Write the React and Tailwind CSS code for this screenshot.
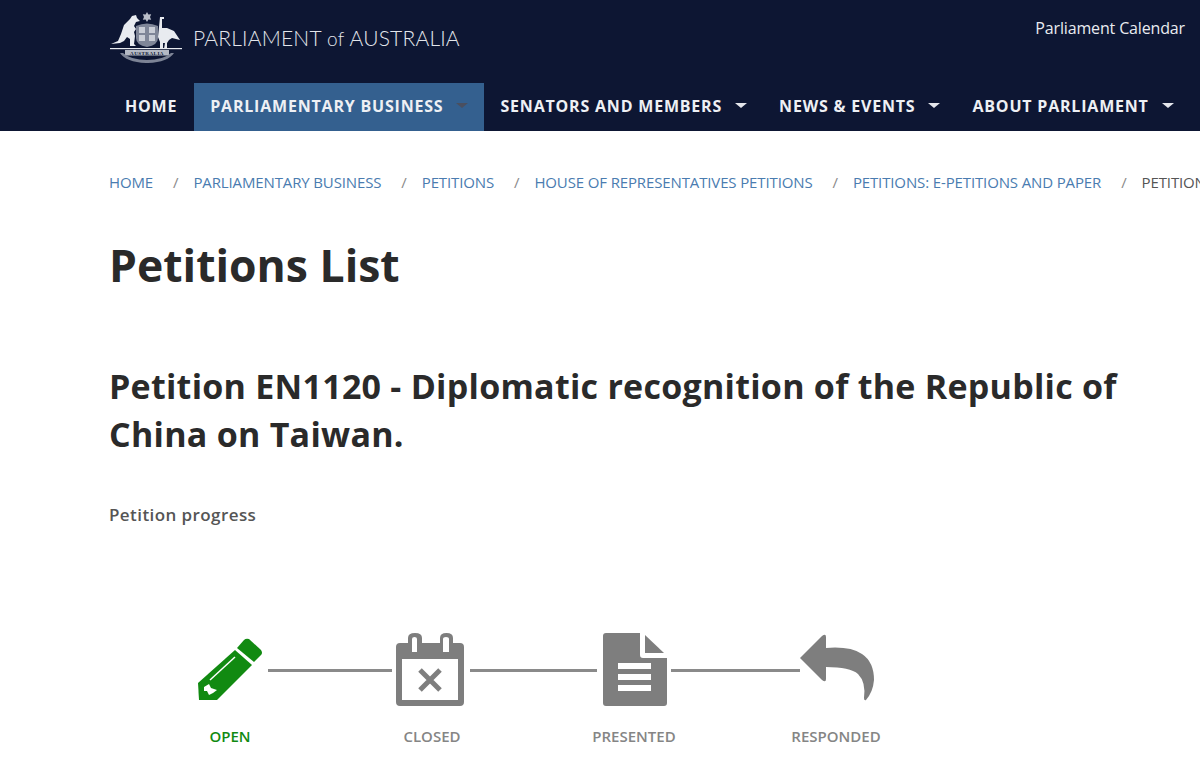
import React from 'react';

const navItems = [
  { label: 'HOME' },
  { label: 'PARLIAMENTARY BUSINESS', caret: true, active: true },
  { label: 'SENATORS AND MEMBERS', caret: true },
  { label: 'NEWS & EVENTS', caret: true },
  { label: 'ABOUT PARLIAMENT', caret: true },
];

const crumbs = [
  'HOME',
  'PARLIAMENTARY BUSINESS',
  'PETITIONS',
  'HOUSE OF REPRESENTATIVES PETITIONS',
  'PETITIONS: E-PETITIONS AND PAPER',
];

const steps = [
  { label: 'OPEN', active: true },
  { label: 'CLOSED' },
  { label: 'PRESENTED' },
  { label: 'RESPONDED' },
];

const Crest = () => (
  <svg width="74" height="54" viewBox="0 0 74 54" className="shrink-0" fill="#e8ebf0">
    {/* kangaroo */}
    <path d="M27 4 l1 3 l3 3 l-4 1 l-2 4 l2 3 l-2 3 l1 4 l-1 8 l2 2 l-6 0 l0 -7 l-3 -2 l-3 4 l-4 2 l-9 1 l7 -3 l3 -7 l3 -9 l6 -6 l2 -3 z" />
    {/* emu */}
    <path d="M51 6 l4 0 l0 2 l-2 0 l0 9 l5 0 l7 3 l6 9 l-8 -2 l-3 2 l-2 3 l0 5 l2 1 l-5 0 l1 -6 l-2 0 l0 6 l-3 0 l0 -7 l-2 -5 z" />
    {/* crest star */}
    <path d="M38 1 l1.400 2.600 l2.800 -.4 l-1.200 2.800 l1.200 2.800 l-2.800 -.4 l-1.400 2.600 l-1.400 -2.600 l-2.800 .4 l1.200 -2.800 l-1.200 -2.800 l2.800 .4 z" fill="#b9bdc8" />
    {/* shield */}
    <path d="M27 15 q11 -5 22 0 v12 q0 7 -11 9 q-11 -2 -11 -9 z" fill="#7f8698" />
    <path d="M30 16 h6 v6 h-6 z M40 16 h6 v6 h-6 z M30 24 h6 v6 h-6 z M40 24 h6 v6 h-6 z" fill="#c9cdd6" />
    <rect x="1" y="37" width="72" height="1.2" />
    {/* banner */}
    <rect x="16" y="39" width="44" height="5.5" fill="#b4b9c4" />
    <text x="38" y="43.8" textAnchor="middle" fontSize="5" fontWeight="700" fill="#0d1633" fontFamily="'Liberation Serif', serif" letterSpacing=".5">AUSTRALIA</text>
    {/* wattle */}
    <path d="M11 42 q6 9 26 10 l2 0 q20 -1 26 -10 l-3 0 q-8 7 -24 7 q-16 0 -24 -7 z" fill="#7d8496" />
  </svg>
);

const Caret = ({ muted }) => (
  <span
    className={`ml-[13px] inline-block h-0 w-0 border-x-[6px] border-t-[5px] border-x-transparent ${muted ? 'border-t-[#4a4f5f]' : 'border-t-[#e4e6ec]'}`}
  />
);

const PencilIcon = () => (
  <svg width="64" height="64" viewBox="0 0 64 64" fill="#118a11">
    <path d="M37 12 L54 27 L19 62 L1 62 L0 45 Z" />
    <path d="M39 10 L46 2 Q48 0 51 1 L63 12 Q65 15 63 17 L56 24 Z" />
    <path d="M12 42 L37 19" stroke="#fff" strokeWidth="1.5" fill="none" />
    <path d="M6 49 L11 46 L13 50 L19 52 L15 55 L11 57 L9 53 L6 53 Z" fill="#fff" />
  </svg>
);

const CalendarIcon = () => (
  <svg width="70" height="76" viewBox="0 0 70 76" fill="#7e7e7e">
    <path fillRule="evenodd" d="M5 11 H13 V6 Q13 1 20 1 Q27 1 27 6 V11 H45 V6 Q45 1 51.500 1 Q58 1 58 6 V11 H65 Q69 11 69 15 V70 Q69 74 65 74 H5 Q1 74 1 70 V15 Q1 11 5 11 Z M7 27 V68 H63 V27 Z M17 7 V20 H22 V7 Q22 5 19.500 5 Q17 5 17 7 Z M48 7 V20 H54 V7 Q54 5 51 5 Q48 5 48 7 Z" />
    <path d="M25 38 L45 58 M45 38 L25 58" stroke="#7e7e7e" strokeWidth="5" fill="none" />
  </svg>
);

const DocIcon = () => (
  <svg width="66" height="76" viewBox="0 0 66 76" fill="#7e7e7e">
    <path fillRule="evenodd" d="M4 1 H38 V23 Q38 26 41 26 H65 V71 Q65 74 62 74 H4 Q1 74 1 71 V4 Q1 1 4 1 Z M16 31 V37 H49 V31 Z M16 42 V48 H49 V42 Z M16 53 V59 H49 V53 Z" />
    <path d="M43 3 L62 21 H43 Z" />
  </svg>
);

const ReplyIcon = () => (
  <svg width="75" height="76" viewBox="0 0 75 76" fill="#7e7e7e">
    <path d="M0 26 L22 4 Q26 1 26 5 V16 Q50 14 62 22 Q74 30 74 48 Q73 60 66 68 Q64 69 64 66 Q66 50 58 42 Q50 35 26 35 V47 Q26 51 22 48 Z" />
  </svg>
);

const App = () => {
  return (
    <div className="h-[782px] w-[1200px] overflow-hidden bg-white font-['Open_Sans',sans-serif]">
      <header className="h-[131px] bg-[#0d1633]">
        <div className="flex h-[83px] items-start justify-between pr-[15px]">
          <div className="flex items-center pl-[109px] pt-[11px]">
            <Crest />
            <span className="ml-[10px] font-['Lato',sans-serif] text-[21px] font-light tracking-[0.2px] text-[#e3e6ec]">
              PARLIAMENT <span className="text-[19px]">of</span> AUSTRALIA
            </span>
          </div>
          <a className="pt-[18px] text-[16px] leading-5 tracking-[-0.15px] text-[#e9ebf0]">Parliament Calendar</a>
        </div>
        <nav className="flex h-12 pl-[109px]">
          {navItems.map((item) => (
            <a
              key={item.label}
              className={`flex items-center whitespace-nowrap px-4 pb-[3px] text-[16px] font-bold tracking-[0.8px] text-[#eef0f4] first:pr-[17px] ${item.active ? 'bg-[#34608f]' : ''}`}
            >
              {item.label}
              {item.caret && <Caret muted={item.active} />}
            </a>
          ))}
        </nav>
      </header>

      <main className="pl-[109px]">
        <ol className="mt-[41px] flex h-5 items-center whitespace-nowrap text-[15px] tracking-[-0.13px]">
          {crumbs.map((c) => (
            <li key={c} className="flex items-center">
              <a className="text-[#4a7cb0]">{c}</a>
              <span className="ml-[20px] mr-[15px] text-[#8a8a8a]">/</span>
            </li>
          ))}
          <li className="text-[#555]">PETITIONS LIST</li>
        </ol>

        <h1 className="mt-[43px] text-[44.5px] font-bold leading-[60px] text-[#2a2a2a]">Petitions List</h1>

        <h2 className="mt-[67px] w-[1040px] text-[34px] font-bold leading-[48px] tracking-[0.26px] text-[#2a2a2a]">
          Petition EN1120 - Diplomatic recognition of the Republic of China on Taiwan.
        </h2>

        <p className="mt-[45px] text-[17px] font-semibold leading-6 tracking-[0.42px] text-[#555]">Petition progress</p>
      </main>

      <section className="mt-[105px]">
        <div className="flex items-center pl-[198px]">
          <PencilIcon />
          <span className="ml-[6px] h-[3px] w-[124px] bg-[#8a8a8a]" />
          <span className="ml-[3px]"><CalendarIcon /></span>
          <span className="ml-[5px] h-[3px] w-[127px] bg-[#8a8a8a]" />
          <span className="ml-[5px]"><DocIcon /></span>
          <span className="ml-[3px] h-[3px] w-[129px] bg-[#8a8a8a]" />
          <ReplyIcon />
        </div>
        <div className="mt-[18px] grid grid-cols-[repeat(4,202px)] pl-[129px]">
          {steps.map((s) => (
            <span
              key={s.label}
              className={`text-center text-[15px] font-semibold leading-5 ${s.active ? 'text-[#118a11]' : 'text-[#858585]'}`}
            >
              {s.label}
            </span>
          ))}
        </div>
      </section>
    </div>
  );
};

export default App;
